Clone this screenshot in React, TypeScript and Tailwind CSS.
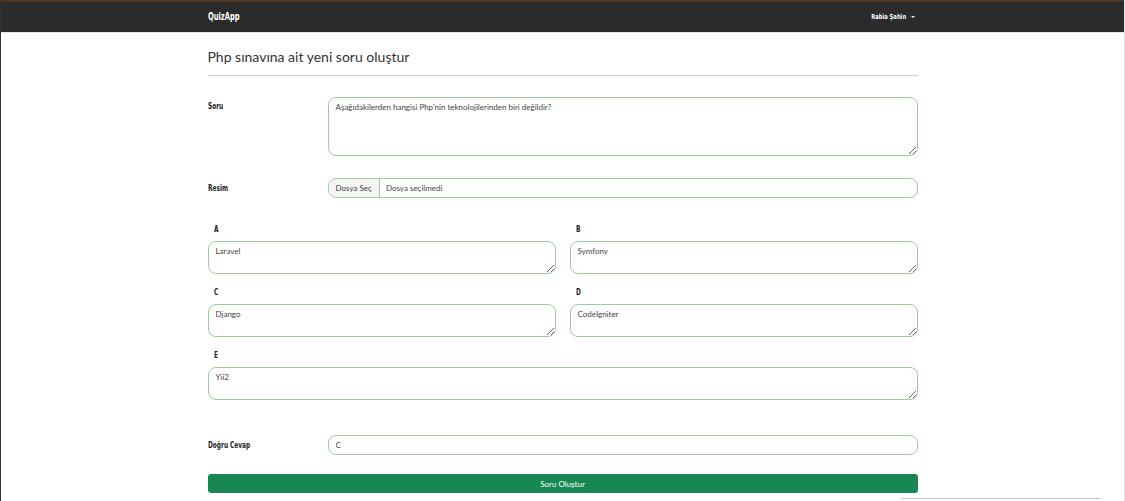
import React from 'react';

const labelFont = { fontFamily: '"DejaVu Sans Condensed", "DejaVu Sans", sans-serif' };
const bodyFont = { fontFamily: 'Lato, "Noto Sans", sans-serif' };

const fieldCls =
  'w-full rounded-[8px] border-[1.5px] border-[#9dcb9b] bg-white px-[7px] text-[8px] text-[#444] outline-none';

// narrow bold label, squeezed to the condensed look of the original font
const Label = ({ text }: { text: string }) => (
  <span
    className="block origin-left scale-x-[0.72] whitespace-nowrap text-[9px] font-bold leading-[12px] text-[#222]"
    style={labelFont}
  >
    {text}
  </span>
);

const OptionField = ({ letter, value }: { letter: string; value: string }) => (
  <div className="flex flex-col">
    <div className="ml-[6px] h-[12px]">
      <Label text={letter} />
    </div>
    <textarea
      defaultValue={value}
      spellCheck={false}
      className={`${fieldCls} mt-[6px] h-[33px] resize-y pt-[4px] leading-[11px]`}
      style={bodyFont}
    />
  </div>
);

const App = () => {
  return (
    <div className="min-h-[501px] border-l border-r border-l-[#333] border-r-[#e2e2e2] bg-white" style={bodyFont}>
      <div className="h-[2px] bg-[#4b3524]" />
      <nav className="h-[31px] border-b border-[#e6e6e6] bg-[#2b2b2b]">
        <div className="mx-auto flex h-[30px] w-[710px] items-center justify-between">
          <span
            className="block origin-left scale-x-[0.75] text-[10px] font-bold leading-[14px] text-white"
            style={labelFont}
          >
            QuizApp
          </span>
          <span className="mr-[3px] flex items-center gap-[4px] text-[7px] font-bold leading-[10px] text-white" style={labelFont}>
            <span className="block origin-right scale-x-[0.83]">Rabia Şahin</span>
            <span className="block h-0 w-0 border-l-[2px] border-r-[2px] border-t-[2px] border-l-transparent border-r-transparent border-t-white" />
          </span>
        </div>
      </nav>

      <div className="mx-auto flex w-[710px] flex-col pt-[14px]">
        <h1 className="h-[20px] text-[14px] leading-[20px] text-[#333]">Php sınavına ait yeni soru oluştur</h1>
        <div className="mt-[8px] h-px bg-[#cfcfcf]" />

        <div className="mt-[21px] flex">
          <div className="w-[120px] pt-[3px]">
            <Label text="Soru" />
          </div>
          <textarea
            defaultValue="Aşağıdakilerden hangisi Php'nin teknolojilerinden biri değildir?"
            spellCheck={false}
            className={`${fieldCls} h-[59px] flex-1 resize-y pt-[4px] leading-[11px]`}
            style={bodyFont}
          />
        </div>

        <div className="mt-[22px] flex items-center">
          <div className="w-[120px]">
            <Label text="Resim" />
          </div>
          <div className="flex h-[20px] flex-1 items-stretch overflow-hidden rounded-[8px] border-[1.5px] border-[#9dcb9b] text-[8px] text-[#444]">
            <span className="flex items-center border-r border-[#b5b5b5] bg-[#f3f3f3] px-[7px]">Dosya Seç</span>
            <span className="flex items-center px-[6px]">Dosya seçilmedi</span>
          </div>
        </div>

        <div className="mt-[25px] grid grid-cols-2 gap-x-[14px] gap-y-[12px]">
          <OptionField letter="A" value="Laravel" />
          <OptionField letter="B" value="Symfony" />
          <OptionField letter="C" value="Django" />
          <OptionField letter="D" value="CodeIgniter" />
        </div>

        <div className="mt-[12px]">
          <OptionField letter="E" value="Yii2" />
        </div>

        <div className="mt-[35px] flex items-center">
          <div className="w-[120px]">
            <Label text="Doğru Cevap" />
          </div>
          <input defaultValue="C" className={`${fieldCls} h-[20px] flex-1`} style={bodyFont} />
        </div>

        <button className="mt-[19px] h-[19px] w-full rounded-[3px] bg-[#198754] text-[8px] text-white">
          Soru Oluştur
        </button>
      </div>

      <div className="ml-[900px] mt-[5px] h-px w-[200px] bg-[#c8c8c8]" />
    </div>
  );
};

export default App;
